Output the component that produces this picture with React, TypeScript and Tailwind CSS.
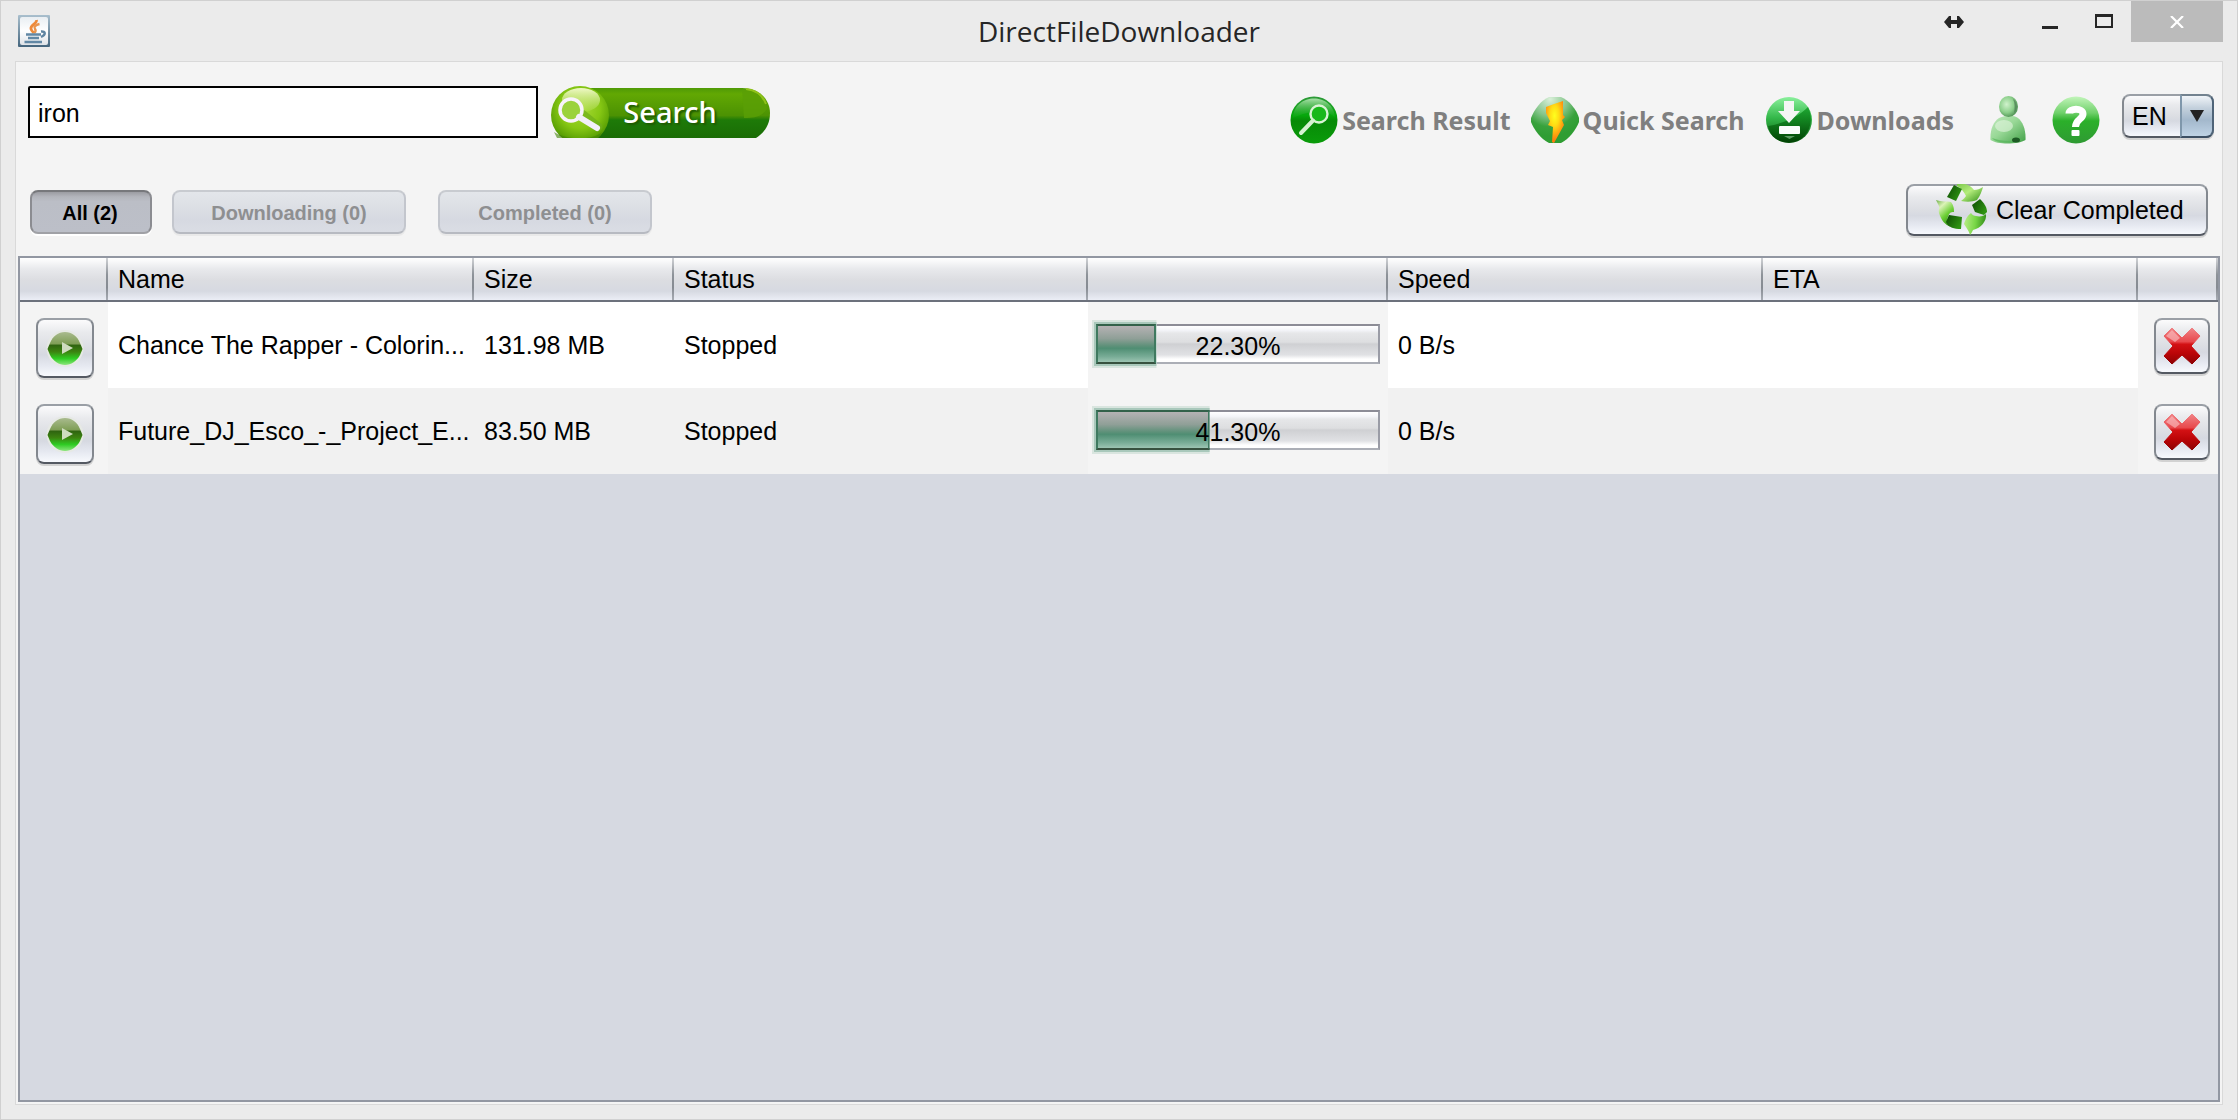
import React from 'react';

const glossy =
  'border-2 border-t-[#9a9fa6] border-x-[#83888f] border-b-[#545962] bg-[linear-gradient(#fbfbfc_0%,#e9eaed_22%,#dcdee3_50%,#d6d9e1_62%,#e6e9f1_82%,#f7f9fd_100%)] shadow-[0_2px_0_#d2d2d2]';

function JavaIcon() {
  return (
    <svg width="32" height="32" viewBox="0 0 32 32" aria-hidden="true">
      <defs>
        <linearGradient id="javaFrame" x1="0" y1="0" x2="0" y2="1">
          <stop offset="0" stopColor="#a9bfcd" />
          <stop offset="1" stopColor="#44657d" />
        </linearGradient>
        <linearGradient id="javaFace" x1="0" y1="0" x2="0" y2="1">
          <stop offset="0" stopColor="#e9eef2" />
          <stop offset="0.5" stopColor="#ffffff" />
          <stop offset="1" stopColor="#dfe3e8" />
        </linearGradient>
      </defs>
      <rect width="32" height="32" rx="1" fill="url(#javaFrame)" />
      <rect x="2" y="2" width="28" height="28" rx="2" fill="url(#javaFace)" />
      <path d="M18.500 5 C19 9 12 10 13 14 C13.500 16 15 17 16 18" fill="none" stroke="#ee8a3a" strokeWidth="2.800" />
      <path d="M21.500 9 C17 10 15.500 12 17 14 C18 15.500 17.500 17 16 18" fill="none" stroke="#e9954f" strokeWidth="2.400" />
      <path d="M8 19.500 H23 M10 23 H21 M6.500 27 H24" fill="none" stroke="#6288a5" strokeWidth="2.400" />
      <path d="M23 16.500 C28 16 28 20 23 22" fill="none" stroke="#5f85a2" strokeWidth="2.400" />
    </svg>
  );
}

function SearchPill() {
  return (
    <svg className="absolute inset-0" width="220" height="52" viewBox="0 0 220 52" aria-hidden="true">
      <defs>
        <linearGradient id="pillBase" x1="0" y1="0" x2="0" y2="1">
          <stop offset="0" stopColor="#4f9a06" />
          <stop offset="0.120" stopColor="#62a803" />
          <stop offset="0.550" stopColor="#4c9203" />
          <stop offset="0.640" stopColor="#1e7a08" />
          <stop offset="1" stopColor="#1a6c05" />
        </linearGradient>
        <radialGradient id="pillOrb" cx="0.500" cy="0.380" r="0.640">
          <stop offset="0" stopColor="#a9da38" />
          <stop offset="0.550" stopColor="#86c714" />
          <stop offset="0.850" stopColor="#5da305" />
          <stop offset="1" stopColor="#4a8c06" />
        </radialGradient>
        <linearGradient id="pillShine" x1="0" y1="0" x2="0" y2="1">
          <stop offset="0" stopColor="#f6fbd2" stopOpacity="0.950" />
          <stop offset="1" stopColor="#d5ee90" stopOpacity="0.150" />
        </linearGradient>
      </defs>
      <path d="M30 2 H192 C210 2 220 14 220 27 C220 39 214 47 206 52 H30 Z" fill="url(#pillBase)" />
      <path d="M192 3 C207 4 217 14 217 23 C212 30 205 32 194 32 Z" fill="#5a9f06" opacity="0.800" />
      <path d="M196 3 C206 4 213 10 216 18" fill="none" stroke="#8fc21a" strokeWidth="2" />
      <circle cx="30" cy="29" r="29" fill="url(#pillOrb)" />
      <path d="M4 46 C16 54 42 55 52 46 L46 58 H10 Z" fill="#3f8205" opacity="0.600" />
      <ellipse cx="31" cy="14" rx="19" ry="12" fill="url(#pillShine)" />
      <path d="M32 28 L48 41" stroke="#6fae1c" strokeWidth="9" strokeLinecap="round" opacity="0.700" />
      <circle cx="21" cy="24" r="11" fill="#9bd23c" stroke="#f8f3fb" strokeWidth="3.500" />
      <path d="M29 31 L47 42" stroke="#f3eff9" strokeWidth="6" strokeLinecap="round" />
    </svg>
  );
}

function ResultIcon() {
  return (
    <svg width="48" height="48" viewBox="0 0 48 48" aria-hidden="true">
      <defs>
        <linearGradient id="resBase" x1="0" y1="0" x2="0" y2="1">
          <stop offset="0" stopColor="#2f9a3a" />
          <stop offset="0.400" stopColor="#06a80c" />
          <stop offset="0.520" stopColor="#078a07" />
          <stop offset="1" stopColor="#0a9c0a" />
        </linearGradient>
        <linearGradient id="resShine" x1="0" y1="0" x2="0" y2="1">
          <stop offset="0" stopColor="#a9e0a9" />
          <stop offset="1" stopColor="#18a81e" stopOpacity="0.200" />
        </linearGradient>
      </defs>
      <circle cx="24" cy="24" r="23.500" fill="url(#resBase)" />
      <path d="M3 22 C4 -4 44 -4 45 22 C38 13 20 14 3 22 Z" fill="url(#resShine)" />
      <circle cx="29" cy="18" r="8.500" fill="#19b81b" stroke="#d9f3d5" strokeWidth="2.400" />
      <path d="M23 24.500 L11 37" stroke="#d6f2d2" strokeWidth="4" strokeLinecap="round" />
    </svg>
  );
}

function QuickIcon() {
  return (
    <svg width="48" height="48" viewBox="0 0 48 48" aria-hidden="true">
      <defs>
        <radialGradient id="quickBase" cx="0.400" cy="0.050" r="0.800">
          <stop offset="0" stopColor="#d9efd9" />
          <stop offset="0.450" stopColor="#84c58a" />
          <stop offset="0.750" stopColor="#38a23c" />
          <stop offset="1" stopColor="#2f9d33" />
        </radialGradient>
        <radialGradient id="bolt" cx="0.450" cy="0.350" r="0.600">
          <stop offset="0" stopColor="#ffff1e" />
          <stop offset="0.400" stopColor="#ffdc14" />
          <stop offset="1" stopColor="#ff7a0c" />
        </radialGradient>
      </defs>
      <path d="M18 1 H30 C38 4 46 14 48 22 V26 C45 34 38 43 30 47 H18 C10 43 3 34 0 26 V22 C3 14 10 4 18 1 Z" fill="url(#quickBase)" />
      <path d="M32 5 L32 19 L34 21 L31 24 L33 29 L23 47 L21 46 L22 31 L17 29 L19 25 L15 17 L15 11 L23 8 Z" fill="url(#bolt)" />
    </svg>
  );
}

function DownloadIcon() {
  return (
    <svg width="48" height="48" viewBox="0 0 48 48" aria-hidden="true">
      <defs>
        <linearGradient id="dlBase" x1="0" y1="0" x2="0" y2="1">
          <stop offset="0" stopColor="#8af09c" />
          <stop offset="0.450" stopColor="#34b84a" />
          <stop offset="1" stopColor="#04560a" />
        </linearGradient>
        <linearGradient id="dlDark" x1="0" y1="0" x2="0" y2="1">
          <stop offset="0" stopColor="#14a028" />
          <stop offset="1" stopColor="#013d02" />
        </linearGradient>
      </defs>
      <circle cx="24" cy="24" r="23" fill="url(#dlBase)" />
      <path d="M3 30 C16 28 32 22 43 11 C50 24 44 46 24 46.500 C12 46 5 40 3 30 Z" fill="url(#dlDark)" opacity="0.850" />
      <path d="M19 5 H29 V15 H35 L24 27 L13 15 H19 Z" fill="#f4f6f4" />
      <rect x="14" y="30" width="21" height="8" rx="1" fill="#fbfdfb" />
      <path d="M19 40 H30 L24.500 43 Z" fill="#5d9a62" />
    </svg>
  );
}

function PersonIcon() {
  return (
    <svg width="48" height="48" viewBox="0 0 48 48" aria-hidden="true">
      <defs>
        <linearGradient id="manBody" x1="0" y1="0" x2="1" y2="1">
          <stop offset="0" stopColor="#c2e9bf" />
          <stop offset="0.450" stopColor="#98d896" />
          <stop offset="1" stopColor="#3f9e45" />
        </linearGradient>
        <radialGradient id="manHead" cx="0.400" cy="0.400" r="0.650">
          <stop offset="0" stopColor="#d0f2cc" />
          <stop offset="0.600" stopColor="#8ccf8b" />
          <stop offset="1" stopColor="#4d8f52" />
        </radialGradient>
      </defs>
      <path d="M15 22 C22 19 30 19 34 22 C39 26 42 34 41.500 44 C34 48.500 14 49 6.500 44 C6 34 9 26 15 22 Z" fill="url(#manBody)" />
      <path d="M8 42 C18 46 32 46 40 42 C38 47 12 49 8 42 Z" fill="#57b65b" opacity="0.700" />
      <ellipse cx="24.500" cy="10.500" rx="9.500" ry="10.500" fill="url(#manHead)" />
      <path d="M29 3 C34 6 34 14 30 17 C31 12 31 7 29 3 Z" fill="#4f7f55" opacity="0.700" />
      <ellipse cx="20" cy="30" rx="9" ry="6" fill="#e2f5e0" opacity="0.600" />
      <ellipse cx="32" cy="44" rx="4" ry="2.500" fill="#1d5a24" />
    </svg>
  );
}

function HelpIcon() {
  return (
    <svg width="48" height="48" viewBox="0 0 48 48" aria-hidden="true">
      <defs>
        <linearGradient id="helpBase" x1="0" y1="0" x2="0" y2="1">
          <stop offset="0" stopColor="#c2f5ba" />
          <stop offset="0.350" stopColor="#6fd06a" />
          <stop offset="0.520" stopColor="#2bb02a" />
          <stop offset="1" stopColor="#2f9a33" />
        </linearGradient>
      </defs>
      <circle cx="24" cy="24" r="23.500" fill="url(#helpBase)" />
      <path d="M17 17.500 C17 12 31 11.500 31 18 C31 23.500 23.500 23 23.500 31" fill="none" stroke="#fff" strokeWidth="7" />
      <rect x="19.500" y="34" width="8" height="6" rx="1" fill="#fff" />
    </svg>
  );
}

function RecycleIcon() {
  return (
    <svg width="52" height="52" viewBox="0 0 52 52" aria-hidden="true">
      <defs>
        <linearGradient id="leafTop" x1="0" y1="0" x2="1" y2="1">
          <stop offset="0" stopColor="#7cc94c" />
          <stop offset="0.450" stopColor="#b4ec7c" />
          <stop offset="1" stopColor="#2f8f14" />
        </linearGradient>
        <linearGradient id="leafLeft" x1="0" y1="0" x2="0.600" y2="1">
          <stop offset="0" stopColor="#6fb04a" />
          <stop offset="0.300" stopColor="#dcf3b8" />
          <stop offset="0.650" stopColor="#6ccf35" />
          <stop offset="1" stopColor="#2f8f14" />
        </linearGradient>
        <linearGradient id="leafRight" x1="0" y1="0.500" x2="1" y2="0.600">
          <stop offset="0" stopColor="#b6ec84" />
          <stop offset="0.500" stopColor="#78d646" />
          <stop offset="1" stopColor="#2f8a18" />
        </linearGradient>
        <linearGradient id="fold" x1="0" y1="0" x2="1" y2="0.600">
          <stop offset="0" stopColor="#0d4a04" />
          <stop offset="1" stopColor="#2f9412" />
        </linearGradient>
      </defs>
      <path d="M21 0 C27 -1 34 0 38 6 C41 6 44 5 47 3 C45 10 43 13 41 16 C36 18 31 18 25 17 C28 15 29 13 30 12 C28 8 25 4 21 2 Z" fill="url(#leafTop)" />
      <path d="M18 1 L26 5 L20 17 L11 13 Z" fill="url(#fold)" />
      <path d="M0 16 C5 18 11 17 15 18 C18 22 18 25 18 28 C16 28 15 28 14 29 C11 33 10 38 15 43 C9 41 5 36 3 29 C2 26 4 24 3 22 C2 20 1 18 0 16 Z" fill="url(#leafLeft)" />
      <path d="M13 31 L26 33 L25 45 C18 45 13 44 10 38 Z" fill="url(#fold)" />
      <path d="M44 15 C48 19 51 23 51 28 L48 31 L39 28 L36 21 Z" fill="url(#fold)" />
      <path d="M28 40 C29 36 32 31 35 29 C36 31 38 32 40 32 C44 33 48 32 50 30 C51 37 45 44 37 46 C36 48 35 50 34 51 C33 47 30 43 28 40 Z" fill="url(#leafRight)" />
    </svg>
  );
}

function PlayIcon() {
  return (
    <svg width="38" height="38" viewBox="0 0 38 38" aria-hidden="true">
      <defs>
        <linearGradient id="playBase" x1="0" y1="0" x2="0" y2="1">
          <stop offset="0" stopColor="#a9bb8e" />
          <stop offset="0.360" stopColor="#7f9e56" />
          <stop offset="0.400" stopColor="#2f6410" />
          <stop offset="0.600" stopColor="#3c8410" />
          <stop offset="0.800" stopColor="#2ecb22" />
          <stop offset="1" stopColor="#8be67c" />
        </linearGradient>
      </defs>
      <circle cx="19" cy="19.500" r="18.500" fill="#e6e9e4" />
      <path d="M4 14 L1.500 20 L4 26 C7 32 13 36 19 36 C25 36 31 32 34 26 L36.500 20 L34 14 C31 7 26 3 19 3 C12 3 7 7 4 14 Z" fill="url(#playBase)" />
      <path d="M16 13 L27 19 L16 25 Z" fill="#cfdcc0" />
    </svg>
  );
}

function RemoveIcon() {
  return (
    <svg width="38" height="38" viewBox="0 0 38 38" aria-hidden="true">
      <defs>
        <linearGradient id="removeBase" x1="0" y1="0" x2="0" y2="1">
          <stop offset="0" stopColor="#f08487" />
          <stop offset="0.380" stopColor="#e8484c" />
          <stop offset="0.450" stopColor="#d31114" />
          <stop offset="0.700" stopColor="#bb0508" />
          <stop offset="1" stopColor="#8d0204" />
        </linearGradient>
      </defs>
      <path
        d="M9 1 L19 11 L29 1 L37 9 L28 19 L37 29 L29 37 L19 28 L9 37 L1 29 L10 19 L1 9 Z"
        fill="url(#removeBase)"
        stroke="url(#removeBase)"
        strokeWidth="1"
        strokeLinejoin="round"
      />
      <path d="M9 3 L17 11 L12 15 L3 9 Z" fill="#fbc4c6" opacity="0.600" />
    </svg>
  );
}

function TitleBar() {
  return (
    <header className="grid h-[60px] grid-cols-[1fr_auto_1fr] px-3.5">
      <div className="pt-3.5 pl-[3px]">
        <JavaIcon />
      </div>
      <h1 className="pt-2.5 font-['Open_Sans'] text-[28px] leading-10 text-[#262626]">DirectFileDownloader</h1>
      <div className="flex items-start justify-end">
        <button type="button" aria-label="Resize" className="mr-12 flex h-[42px] w-[42px] items-center justify-center">
          <svg width="20" height="12" viewBox="0 0 20 12" aria-hidden="true">
            <path d="M0 6 L5 0 H7 V4 H13 V0 H15 L20 6 L15 12 H13 V8 H7 V12 H5 Z" fill="#262626" />
          </svg>
        </button>
        <button type="button" aria-label="Minimize" className="flex h-[42px] w-[54px] items-center justify-center pt-2.5">
          <span className="h-[3px] w-4 bg-[#262626]" />
        </button>
        <button type="button" aria-label="Maximize" className="flex h-10 w-[54px] items-center justify-center">
          <span className="h-3.5 w-[18px] border-2 border-t-3 border-[#262626]" />
        </button>
        <button type="button" aria-label="Close" className="flex h-[41px] w-[92px] items-center justify-center bg-[#bbbbbb]">
          <svg width="14" height="12" viewBox="0 0 14 12" aria-hidden="true">
            <path d="M1 0 L13 12 M13 0 L1 12" stroke="#fff" strokeWidth="2.200" />
          </svg>
        </button>
      </div>
    </header>
  );
}

function NavLink({ icon, label }: { icon: React.ReactNode; label: string }) {
  return (
    <a href="#" className="flex items-center gap-1 font-['Noto_Sans'] text-[25px] leading-8 font-bold whitespace-nowrap text-[#7f7f7f]">
      {icon}
      <span>{label}</span>
    </a>
  );
}

function Toolbar() {
  return (
    <div className="flex items-start justify-between pt-6 pr-2 pl-3">
      <form className="flex gap-3" onSubmit={(e) => e.preventDefault()}>
        <input
          type="text"
          aria-label="Search for files"
          defaultValue="iron"
          className="h-[52px] w-[510px] rounded-tl-xs border-2 border-black bg-white px-2 pt-0.5 text-[25px] outline-none"
        />
        <button type="submit" className="relative h-[52px] w-[220px]">
          <SearchPill />
          <span className="relative block pl-5 font-['Noto_Sans'] text-[29px] leading-9 font-medium text-white [text-shadow:2px_2px_2px_#1f5a00]">
            Search
          </span>
        </button>
      </form>
      <nav className="mt-2 flex h-[50px] items-end gap-5">
        <div className="flex gap-5 pr-2.5">
          <NavLink icon={<ResultIcon />} label="Search Result" />
          <NavLink icon={<QuickIcon />} label="Quick Search" />
          <NavLink icon={<DownloadIcon />} label="Downloads" />
        </div>
        <a href="#" aria-label="Account">
          <PersonIcon />
        </a>
        <a href="#" aria-label="Help" className="mr-0.5">
          <HelpIcon />
        </a>
        <div className="relative self-start">
          <select
            aria-label="Language"
            className={`h-11 w-[92px] appearance-none rounded-lg pt-0.5 pl-2 text-[25px] outline-none ${glossy}`}
          >
            <option>EN</option>
          </select>
          <span className="pointer-events-none absolute top-0 right-0 flex h-11 w-[34px] items-center justify-center rounded-r-lg border-2 border-t-[#72828f] border-r-[#4f6478] border-b-[#3c4f63] border-l-[#7f97ab] bg-[linear-gradient(#f0f4f8_0%,#c3d0dc_30%,#a3b8cc_60%,#bfd3e5_100%)]">
            <svg width="14" height="12" viewBox="0 0 14 12" aria-hidden="true">
              <path d="M0 0 H14 L7 12 Z" fill="#222" />
            </svg>
          </span>
        </div>
      </nav>
    </div>
  );
}

function FilterBar() {
  const idle =
    'h-11 rounded-lg border-2 pt-0.5 border-t-[#c8cbd0] border-x-[#c3c6cd] border-b-[#b7bac1] bg-[linear-gradient(#e3e6ea,#dadde3_50%,#d6d9e1_70%,#dadde4)] text-xl font-bold text-[#8e8f91] shadow-[0_2px_0_#e9e9e9]';
  return (
    <div className="flex items-start justify-between px-3.5 pt-10 pb-5">
      <div className="flex pt-1.5">
        <button
          type="button"
          aria-pressed="true"
          className="h-11 w-[122px] rounded-lg border-2 border-t-[#77787c] border-x-[#8b8c91] border-b-[#a0a1a6] bg-[linear-gradient(#9b9ca2_0%,#b3b5bc_12%,#bbbec6_24%,#bcbfc8_100%)] pt-0.5 pr-0.5 text-xl font-bold text-black shadow-[0_2px_0_#fff]"
        >
          All (2)
        </button>
        <button type="button" className={`ml-5 w-[234px] ${idle}`}>
          Downloading (0)
        </button>
        <button type="button" className={`ml-8 w-[214px] ${idle}`}>
          Completed (0)
        </button>
      </div>
      <button type="button" className={`flex h-[52px] w-[302px] items-center gap-2 rounded-lg pl-7 text-[25px] whitespace-nowrap ${glossy}`}>
        <RecycleIcon />
        <span className="pt-0.5">Clear Completed</span>
      </button>
    </div>
  );
}

const columns = [
  { key: 'start', label: '', width: 'w-[88px]' },
  { key: 'name', label: 'Name', width: 'w-[366px]' },
  { key: 'size', label: 'Size', width: 'w-[200px]' },
  { key: 'status', label: 'Status', width: 'w-[414px]' },
  { key: 'progress', label: '', width: 'w-[300px]' },
  { key: 'speed', label: 'Speed', width: '' },
  { key: 'eta', label: 'ETA', width: '' },
  { key: 'remove', label: '', width: 'w-[80px]' },
];

const downloads = [
  { name: 'Chance The Rapper - Colorin...', size: '131.98 MB', status: 'Stopped', progress: 22.3, speed: '0 B/s', eta: '' },
  { name: 'Future_DJ_Esco_-_Project_E...', size: '83.50 MB', status: 'Stopped', progress: 41.3, speed: '0 B/s', eta: '' },
];

function Progress({ value }: { value: number }) {
  return (
    <div
      role="progressbar"
      aria-valuenow={value}
      aria-valuemin={0}
      aria-valuemax={100}
      className="relative h-10 border-2 border-x-[#9a9ca6] border-t-[#8c8c96] border-b-[#abaeb6] bg-[linear-gradient(#ffffff_0%,#f3f4f8_12%,#e6e7e9_20%,#dddee0_45%,#cfd0d3_50%,#e0e1e4_80%,#ffffff_92%)]"
    >
      <div
        className="absolute -top-0.5 -bottom-0.5 -left-0.5 border-2 border-x-[#3f7a60] border-t-[#33614a] border-b-[#37513f] bg-[linear-gradient(#b5b2b4_0%,#8f9f97_35%,#5f917a_55%,#4f8e73_62%,#78ac96_85%,#9cc4b2_100%)] shadow-[0_0_0_2px_#a9c8bb,0_0_0_4px_#d9e5df] [clip-path:inset(-4px_0_-4px_-4px)]"
        style={{ width: `calc(${value}% - 2px)` }}
      />
      <span className="relative block pt-0.5 text-center leading-9">{value.toFixed(2)}%</span>
    </div>
  );
}

function DownloadsTable() {
  return (
    <div className="mx-0.5 mb-0.5 flex-1 border-2 border-[#9297a2] bg-[#d6d9e1]">
      <table className="w-full table-fixed border-separate border-spacing-0 text-[25px] leading-8">
        <thead>
          <tr className="h-11 bg-[linear-gradient(#ffffff_0%,#e8e9ec_25%,#dcdde1_50%,#d6d9e1_75%,#f0f2fa_100%)]">
            {columns.map((c) => (
              <th
                key={c.key}
                className={`relative border-b-2 border-[#6c717c] p-0 pl-2.5 text-left font-normal ${c.width}`}
              >
                {c.label}
                <span className="absolute top-0 right-0 h-full w-0.5 bg-[linear-gradient(#d0d2d6,#8d9298_40%,#868b92_70%,#a7abb3)]" />
              </th>
            ))}
          </tr>
        </thead>
        <tbody>
          {downloads.map((d) => (
            <tr key={d.name} className="h-[86px] bg-white even:bg-[#f1f1f1]">
              <td className="bg-[#f4f4f4] p-0 pt-4 pl-4 align-top">
                <button type="button" aria-label={`Start ${d.name}`} className={`flex h-[60px] w-[58px] items-center justify-center rounded-lg ${glossy}`}>
                  <PlayIcon />
                </button>
              </td>
              <td className="p-0 pl-2.5 whitespace-nowrap">{d.name}</td>
              <td className="p-0 pl-2.5">{d.size}</td>
              <td className="p-0 pl-2.5">{d.status}</td>
              <td className="bg-[#f4f4f4] px-2 pt-[22px] pb-0 align-top">
                <Progress value={d.progress} />
              </td>
              <td className="p-0 pl-2.5">{d.speed}</td>
              <td className="p-0 pl-2.5">{d.eta}</td>
              <td className="bg-[#f4f4f4] p-0 pt-4 pl-4 align-top">
                <button type="button" aria-label={`Remove ${d.name}`} className={`flex size-14 items-center justify-center rounded-lg ${glossy}`}>
                  <RemoveIcon />
                </button>
              </td>
            </tr>
          ))}
        </tbody>
      </table>
    </div>
  );
}

export default function App() {
  return (
    <div className="flex min-h-screen flex-col border border-[#d0d0d0] bg-[#ebebeb] font-['Liberation_Sans',Arial,sans-serif] text-black">
      <TitleBar />
      <main className="mx-3.5 mb-3.5 flex flex-1 flex-col border border-[#d9d9d9] bg-[#f4f4f4]">
        <Toolbar />
        <FilterBar />
        <DownloadsTable />
      </main>
    </div>
  );
}
